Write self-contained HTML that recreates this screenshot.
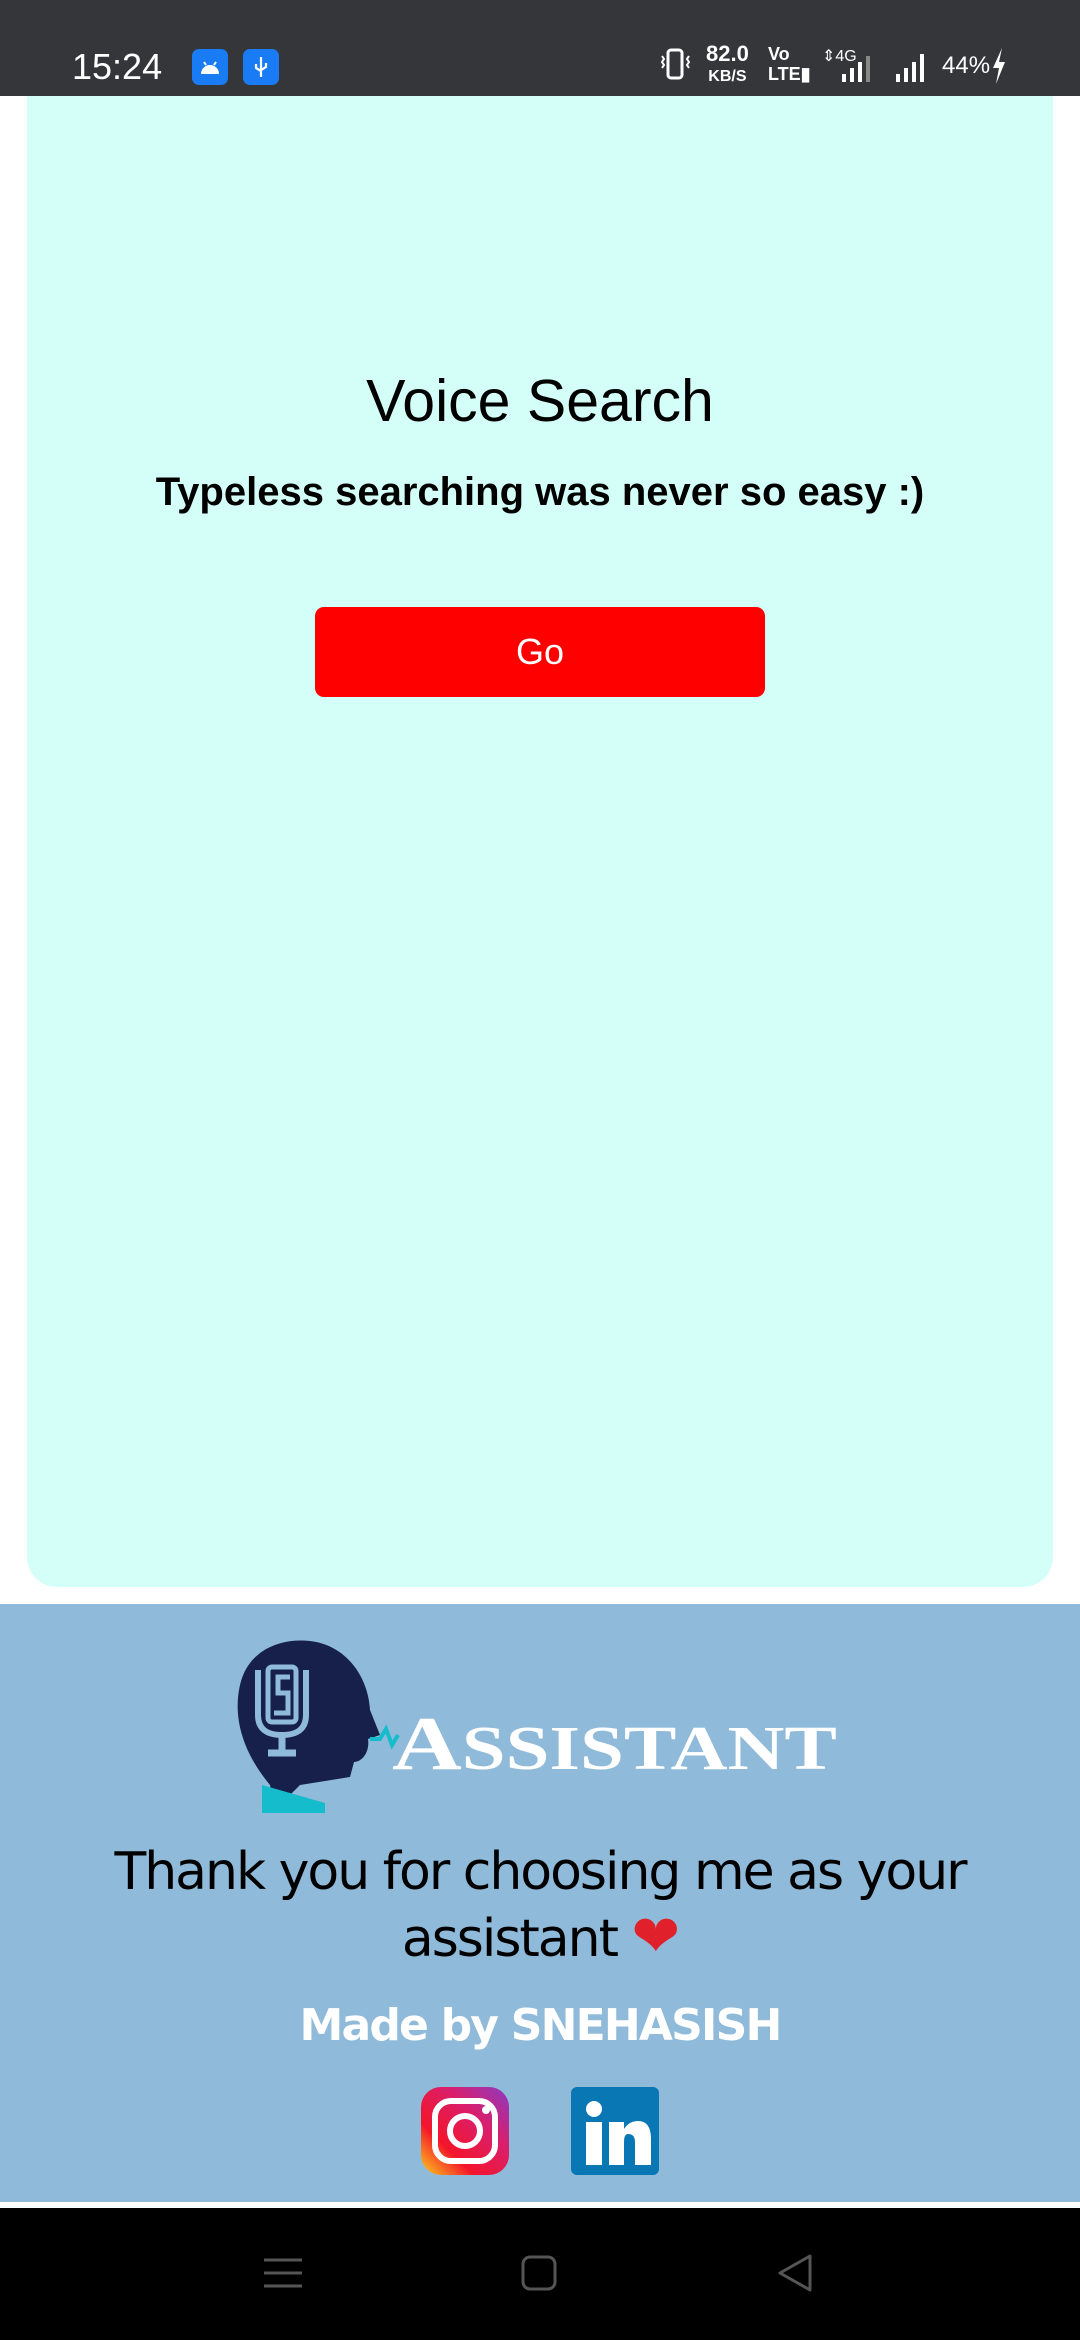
<!DOCTYPE html>
<html><head><meta charset="utf-8"><style>
*{margin:0;padding:0;box-sizing:border-box}
body{width:1080px;height:2340px;background:#fff;position:relative;overflow:hidden;font-family:"Liberation Sans",sans-serif}
.abs{position:absolute}
#sb{left:0;top:0;width:1080px;height:96px;background:#35363a;color:#fff}
#card{left:27px;top:96px;width:1026px;height:1491px;background:#d4fff8;border-radius:0 0 30px 30px}
#foot{left:0;top:1604px;width:1080px;height:598px;background:#8fbad9}
#nav{left:0;top:2208px;width:1080px;height:132px;background:#000}
.c{left:0;width:1080px;text-align:center}
</style></head><body>
<div id="sb" class="abs">
 <div class="abs" style="left:72px;top:46px;font-size:36px;">15:24</div>
 <div class="abs" style="left:192px;top:49px;width:36px;height:36px;border-radius:7px;background:#1a7cf5"></div>
 <svg class="abs" style="left:192px;top:49px" width="36" height="36"><path d="M9 25 A9 9 0 0 1 27 25 Z" fill="#fff"/><path d="M12 13 L14 16 M24 13 L22 16" stroke="#fff" stroke-width="2"/></svg>
 <div class="abs" style="left:243px;top:49px;width:36px;height:36px;border-radius:7px;background:#1a7cf5"></div>
 <svg class="abs" style="left:243px;top:49px" width="36" height="36"><path d="M18 8 V28 M13 15 V19 L18 22 M23 14 V18 L18 21" stroke="#fff" stroke-width="2.2" fill="none"/></svg>
 <svg class="abs" style="left:658px;top:48px" width="36" height="32"><rect x="10" y="2" width="14" height="28" rx="3" fill="none" stroke="#fff" stroke-width="3"/><path d="M4 8 l2 3 -2 3 2 3 -2 3 M31 8 l-2 3 2 3 -2 3 2 3" stroke="#fff" stroke-width="2" fill="none"/></svg>
 <div class="abs" style="left:706px;top:44px;font-size:22px;font-weight:bold;line-height:20px;text-align:center">82.0<br><span style="font-size:16px">KB/S</span></div>
 <div class="abs" style="left:768px;top:44px;font-size:18px;font-weight:bold;line-height:20px">Vo<br>LTE▮</div>
 <div class="abs" style="left:822px;top:46px;font-size:16px">⇕4G</div>
 <svg class="abs" style="left:838px;top:52px" width="160" height="32"><rect x="4" y="22" width="4" height="8" fill="#fff"/><rect x="12" y="16" width="4" height="14" fill="#fff"/><rect x="20" y="10" width="4" height="20" fill="#fff"/><rect x="28" y="4" width="4" height="26" fill="#888"/><rect x="58" y="22" width="4" height="8" fill="#fff"/><rect x="66" y="16" width="4" height="14" fill="#fff"/><rect x="74" y="10" width="4" height="20" fill="#fff"/><rect x="82" y="2" width="4" height="28" fill="#fff"/></svg>
 <div class="abs" style="left:942px;top:52px;font-size:24px">44%</div>
 <svg class="abs" style="left:990px;top:48px" width="18" height="36"><path d="M12 0 L3 20 H9 L6 36 L15 14 H9 Z" fill="#fff"/></svg>
</div>
<div id="card" class="abs"></div>
<div class="abs c" style="top:367px;font-size:59px;color:#000">Voice Search</div>
<div class="abs c" style="top:470px;font-size:40px;font-weight:bold;color:#000">Typeless searching was never so easy :)</div>
<div class="abs" style="left:315px;top:607px;width:450px;height:90px;background:#ff0000;border-radius:9px;color:#fff;font-size:36px;text-align:center;line-height:90px">Go</div>
<div id="foot" class="abs"></div>
<svg class="abs" style="left:230px;top:1635px" width="620" height="180">
 <path d="M45 175 L40 150 C15 120 2 85 10 50 C18 15 50 3 80 6 C115 10 138 40 140 75 L150 100 L138 104 C140 117 132 127 124 127 L120 142 L70 150 Z" fill="#16204a"/>
 <path d="M28 35 V80 Q28 100 52 100 Q76 100 76 80 V35" fill="none" stroke="#8fbad9" stroke-width="6"/>
 <rect x="38" y="32" width="28" height="55" rx="4" fill="none" stroke="#8fbad9" stroke-width="5"/>
 <path d="M52 100 V115 M38 118 H66" stroke="#8fbad9" stroke-width="7"/>
 <path d="M60 42 H48 V58 H58 V78 H44" fill="none" stroke="#8fbad9" stroke-width="5"/>
 <path d="M32 150 L95 168 V178 H32 Z" fill="#14bccc"/>
 <path d="M140 104 H150 L156 94 L162 110 L168 100" stroke="#14bccc" stroke-width="4" fill="none"/>
 <text x="162" y="134" font-family="Liberation Serif,serif" font-weight="bold" font-size="76" fill="#fff" textLength="445" lengthAdjust="spacingAndGlyphs">A<tspan font-size="62">SSISTANT</tspan></text>
</svg>
<div class="abs c" style="top:1840px;font-size:52px;line-height:64px;font-family:'DejaVu Sans',sans-serif;letter-spacing:-2px;color:#000">Thank you for choosing me as your<br>assistant <span style="color:#e0202a;font-size:58px">❤</span></div>
<div class="abs c" style="top:2000px;font-size:44px;font-weight:bold;font-family:'DejaVu Sans',sans-serif;letter-spacing:-1.8px;color:#fff">Made by SNEHASISH</div>
<svg class="abs" style="left:421px;top:2087px" width="88" height="88">
 <defs><linearGradient id="ig" x1="0" y1="1" x2="1" y2="0"><stop offset="0" stop-color="#fed21c"/><stop offset=".3" stop-color="#f3152b"/><stop offset=".65" stop-color="#d91f6d"/><stop offset="1" stop-color="#8a3ac4"/></linearGradient></defs>
 <rect width="88" height="88" rx="20" fill="url(#ig)"/>
 <rect x="14" y="14" width="60" height="60" rx="16" fill="none" stroke="#fff" stroke-width="6"/>
 <circle cx="44" cy="44" r="15" fill="none" stroke="#fff" stroke-width="6"/>
 <circle cx="65" cy="23" r="4" fill="#fff"/>
</svg>
<svg class="abs" style="left:571px;top:2087px" width="88" height="88">
 <rect width="88" height="88" rx="6" fill="#0a77b5"/>
 <circle cx="23" cy="22" r="8" fill="#fff"/>
 <rect x="15" y="35" width="16" height="43" fill="#fff"/>
 <path d="M38 35 H53 V42 Q58 34 67 34 Q80 34 80 52 V78 H64 V55 Q64 47 57 47 Q53 47 53 55 V78 H38 Z" fill="#fff"/>
</svg>
<div id="nav" class="abs"></div>
<svg class="abs" style="left:260px;top:2250px" width="560" height="50">
 <path d="M4 10 H42 M4 23 H42 M4 36 H42" stroke="#555" stroke-width="3"/>
 <rect x="263" y="7" width="32" height="32" rx="7" fill="none" stroke="#555" stroke-width="3"/>
 <path d="M550 6 L520 23 L550 40 Z" fill="none" stroke="#555" stroke-width="3" stroke-linejoin="round"/>
</svg>
</body></html>
